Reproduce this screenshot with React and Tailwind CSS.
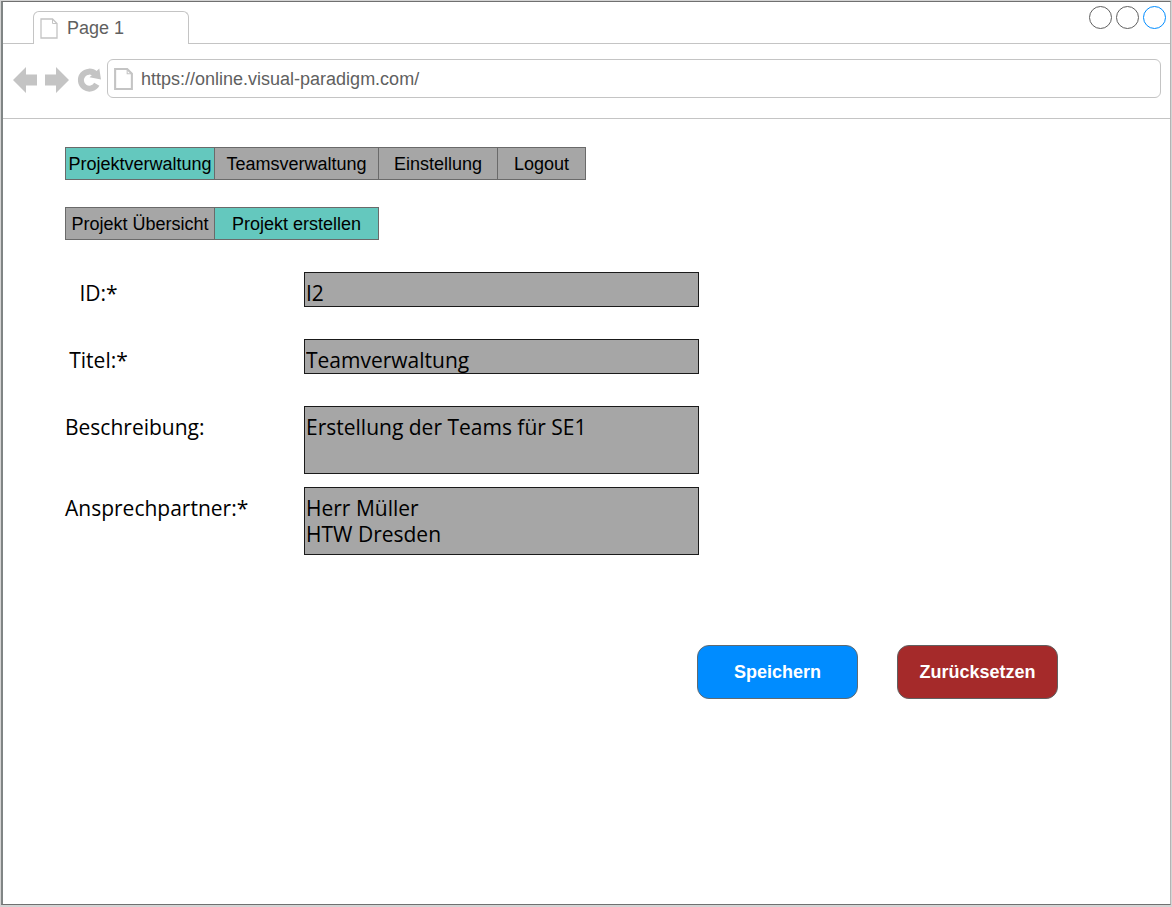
import React from "react";

const mainMenu = [
  { label: "Projektverwaltung", width: "w-[150px]", active: true },
  { label: "Teamsverwaltung", width: "w-[165px]" },
  { label: "Einstellung", width: "w-[120px]" },
  { label: "Logout", width: "w-[89px]" },
];

const subMenu = [
  { label: "Projekt Übersicht", width: "w-[150px]" },
  { label: "Projekt erstellen", width: "w-[165px]", active: true },
];

function PageIcon({ className, stroke }) {
  return (
    <svg viewBox="0 0 18 21" className={className} fill="none" stroke="#c4c4c4" strokeWidth={stroke} aria-hidden="true">
      <path d="M1 1H12.500L17 5.500V20H1Z" />
      <path d="M12.500 1V5.500H17" strokeWidth="1" />
    </svg>
  );
}

function Menu({ items, label }) {
  return (
    <nav aria-label={label} className="flex">
      {items.map((item) => (
        <button
          key={item.label}
          type="button"
          className={`-mr-px h-[33px] shrink-0 whitespace-nowrap border border-[#6a6a6a] text-center text-[18px] leading-[20px] ${item.width} ${
            item.active ? "bg-[#64c8be]" : "bg-[#a6a6a6]"
          }`}
        >
          {item.label}
        </button>
      ))}
    </nav>
  );
}

function Field({ id, label, value, multiline, centered }) {
  const box = "block w-[395px] shrink-0 resize-none overflow-hidden rounded-none border border-[#1a1a1a] bg-[#a6a6a6] px-px leading-[26px] outline-none";
  return (
    <div className="flex">
      <div className="w-[239px] shrink-0 pt-2">
        <label htmlFor={id} className={`block whitespace-nowrap leading-[26px] ${centered ? "w-[67px] text-center" : ""}`}>
          {label}
        </label>
      </div>
      {multiline ? (
        <textarea id={id} defaultValue={value} className={`${box} h-[68px] pt-[7px]`} />
      ) : (
        <input id={id} type="text" defaultValue={value} className={`${box} h-[35px] pt-[7px]`} />
      )}
    </div>
  );
}

export default function App() {
  return (
    <div className="flex min-h-screen flex-col bg-[#d4d4d4] pt-px pr-px pb-[2px] pl-px font-['Liberation_Sans',Arial,sans-serif] text-black">
      <div className="flex grow flex-col border border-l-2 border-t-[#707070] border-r-[#b4b4b4] border-b-[#707070] border-l-[#808585] bg-white">
        <header className="text-[#606060]">
          <div className="flex h-[42px] items-end">
            <div className="h-px w-[30px] bg-[#c4c4c4]" />
            <div className="flex h-[33px] w-[156px] items-center gap-[9px] rounded-t-[6px] border border-b-0 border-[#c4c4c4] px-[6px]">
              <PageIcon className="h-[21px] w-[18px]" stroke="1.3" />
              <span className="text-[18px] leading-[20px]">Page 1</span>
            </div>
            <div className="flex h-full grow justify-end gap-1 border-b border-[#c4c4c4] pt-1 pr-1">
              <button type="button" aria-label="Minimieren" className="size-[23px] rounded-full border border-[#606060]" />
              <button type="button" aria-label="Maximieren" className="size-[23px] rounded-full border border-[#606060]" />
              <button type="button" aria-label="Schließen" className="size-[23px] rounded-full border border-[#008cff]" />
            </div>
          </div>
          <div className="flex h-[75px] items-start border-b border-[#c4c4c4] pt-[15px] pr-[9px] pl-[10px]">
            <div className="flex h-[39px] shrink-0 items-center gap-2 pt-[3px] pr-[6px] text-[#c4c4c4]">
              <button type="button" aria-label="Zurück">
                <svg viewBox="0 0 24 26" className="h-[26px] w-[24px]" fill="currentColor">
                  <path d="M0 13L13 0V7.500H24V18.500H13V26Z" />
                </svg>
              </button>
              <button type="button" aria-label="Vorwärts">
                <svg viewBox="0 0 24 26" className="h-[26px] w-[24px]" fill="currentColor">
                  <path d="M24 13L11 0V7.500H0V18.500H11V26Z" />
                </svg>
              </button>
              <button type="button" aria-label="Neu laden">
                <svg viewBox="0 0 24 26" className="h-[26px] w-[24px]" fill="none">
                  <path d="M18.300 7A8.500 8.500 0 1 0 19.800 17.300" stroke="currentColor" strokeWidth="6" />
                  <path d="M22.300 1.500L24 12.500L12.500 10.200Z" fill="currentColor" />
                </svg>
              </button>
            </div>
            <div className="flex h-[39px] grow items-center gap-2 rounded-[6px] border border-[#c4c4c4] px-[6px]">
              <PageIcon className="h-[22px] w-[19px] shrink-0" stroke="2" />
              <input
                type="text"
                aria-label="Adresse"
                defaultValue="https://online.visual-paradigm.com/"
                className="w-full min-w-0 bg-transparent text-[18px] leading-[20px] outline-none"
              />
            </div>
          </div>
        </header>

        <main className="px-[62px] pt-7">
          <div className="flex flex-col gap-[27px]">
            <Menu items={mainMenu} label="Hauptmenü" />
            <Menu items={subMenu} label="Projektmenü" />
          </div>

          <form onSubmit={(e) => e.preventDefault()} className="pt-8">
            <div className="flex flex-col gap-[13px] font-['Open_Sans',sans-serif] text-[21px]">
              <div className="flex flex-col gap-8">
                <Field id="id" label="ID:*" value="I2" centered />
                <Field id="titel" label="Titel:*" value="Teamverwaltung" centered />
                <Field id="beschreibung" label="Beschreibung:" value="Erstellung der Teams für SE1" multiline />
              </div>
              <Field id="ansprechpartner" label="Ansprechpartner:*" value={"Herr Müller\nHTW Dresden"} multiline />
            </div>
            <div className="flex gap-[39px] pt-[90px] pb-8 pl-[632px] text-[18px] leading-[20px] font-bold text-white">
              <button type="submit" className="h-[54px] w-[161px] shrink-0 rounded-[12px] border border-[#606a70] bg-[#008cff]">
                Speichern
              </button>
              <button type="reset" className="h-[54px] w-[161px] shrink-0 rounded-[12px] border border-[#606060] bg-[#a52a2a]">
                Zurücksetzen
              </button>
            </div>
          </form>
        </main>
      </div>
    </div>
  );
}
